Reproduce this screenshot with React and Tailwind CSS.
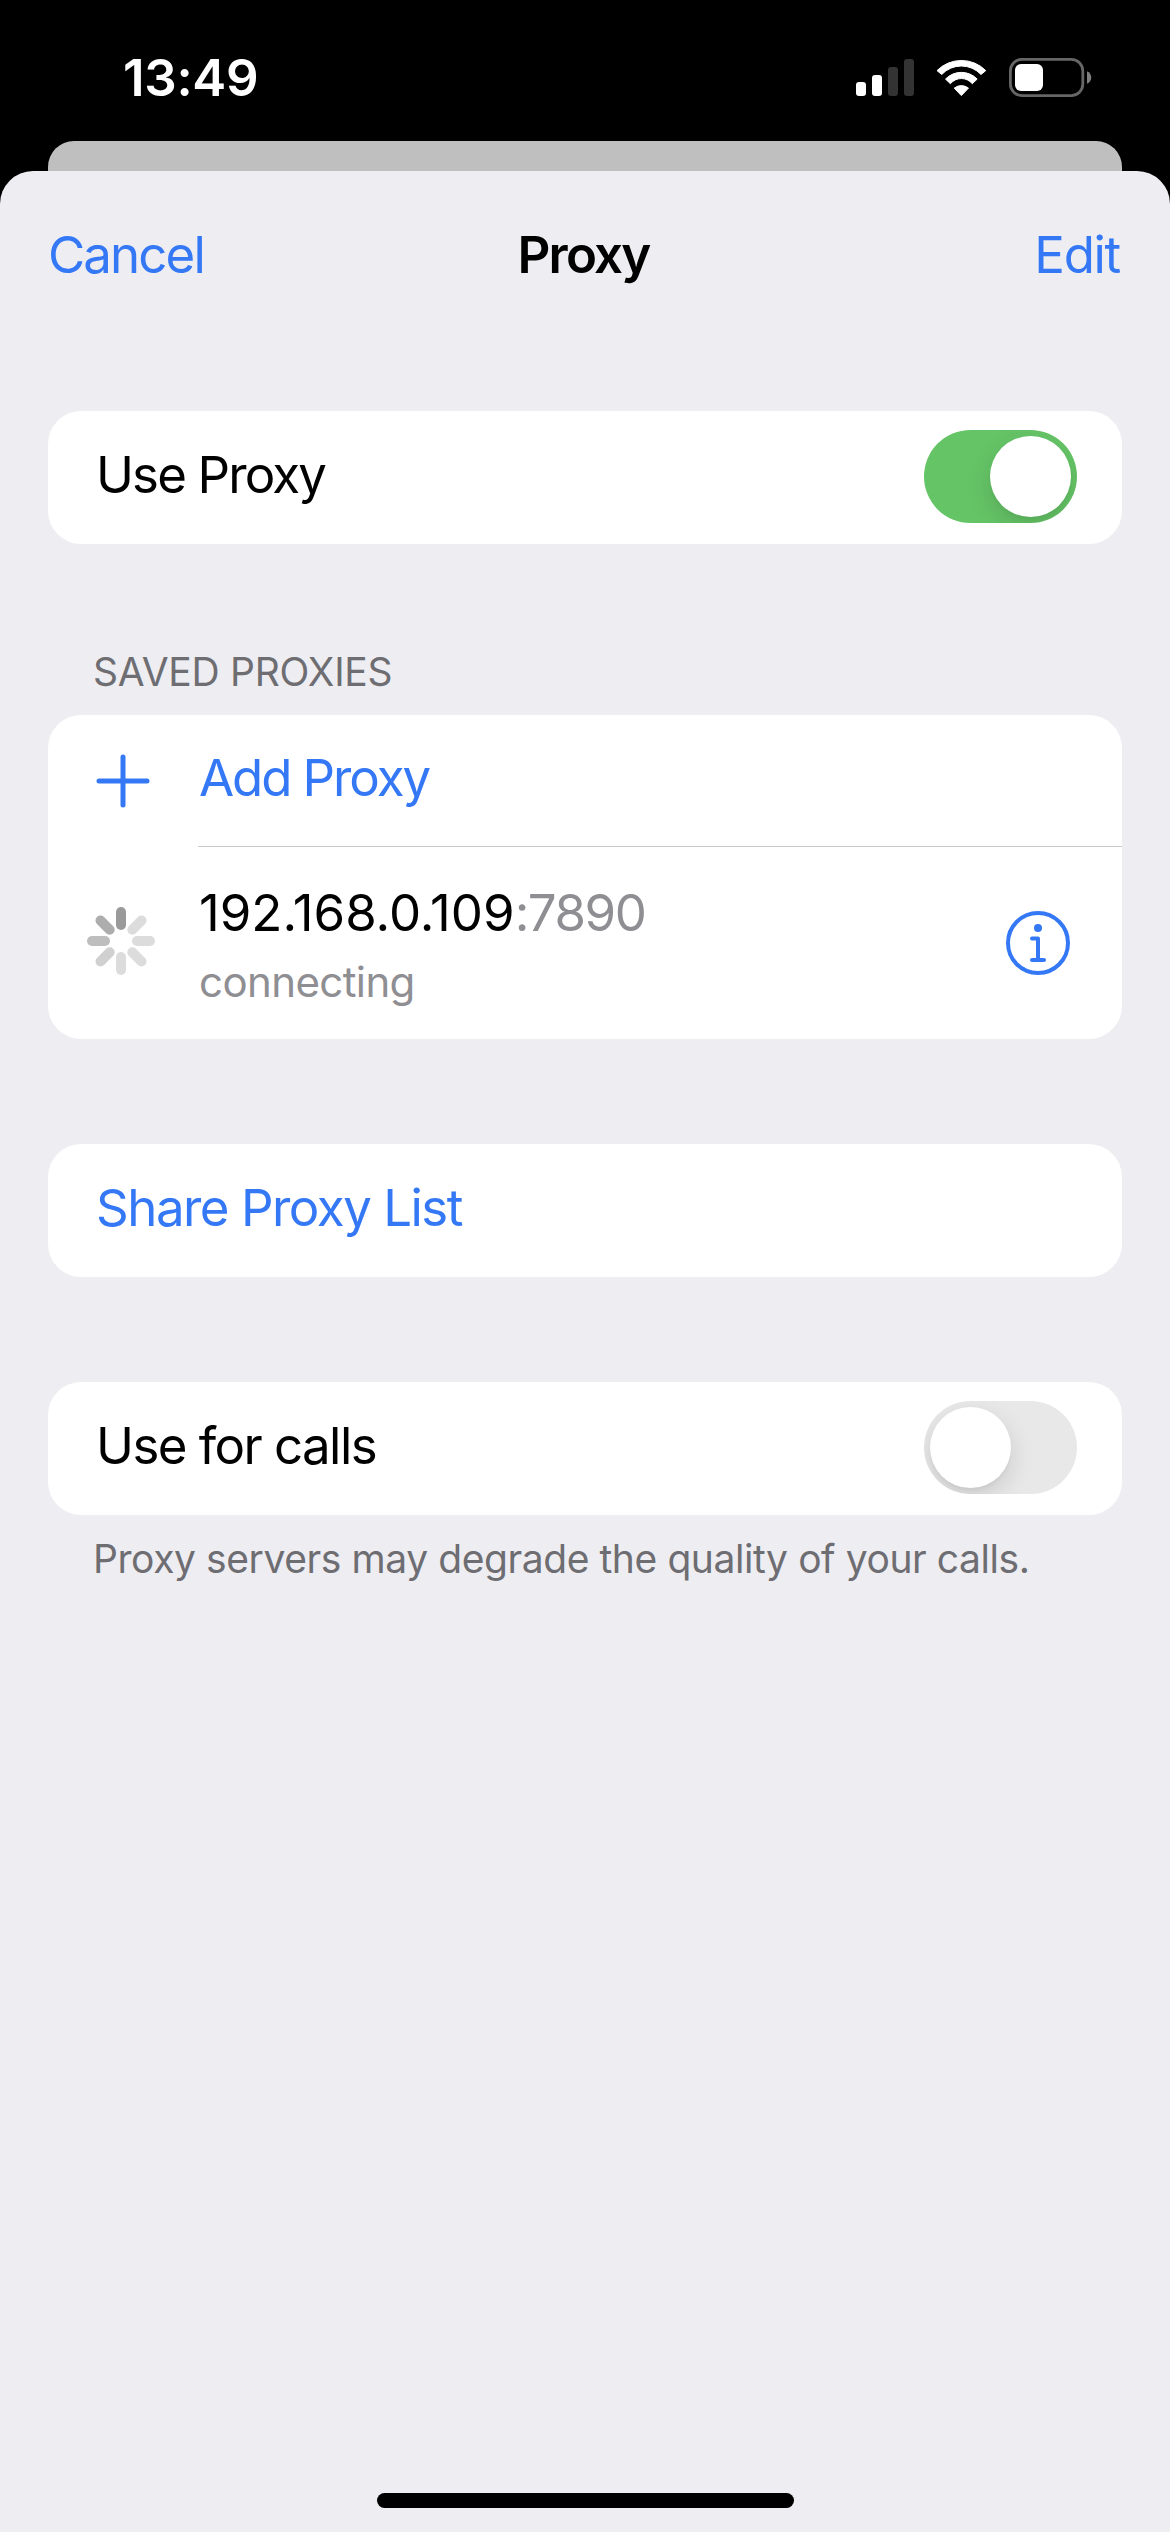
import React from "react";

function StatusBar() {
  return (
    <div className="flex h-[141px] items-start pl-[123px]">
      <span className="mt-[47px] w-[733px] text-[51px] leading-[61px] font-semibold tracking-[-0.3px] text-white">
        13:49
      </span>
      <svg className="mt-[57px] shrink-0" width="236" height="42" viewBox="856 57 236 42" fill="#fff">
        <rect x="856" y="82" width="10" height="14" rx="3" />
        <rect x="872" y="75" width="10" height="21" rx="3" />
        <rect x="888" y="67" width="10" height="29" rx="3" fill="#333" />
        <rect x="904" y="59" width="10" height="37" rx="3" fill="#333" />
        <path
          d="M937 70.6A34.4 34.4 0 0 1 985.8 70.6L981 74.5A27 27 0 0 0 941.7 74.5Z
             M945.5 79.1A22 22 0 0 1 977.2 79.1L972.3 83.7A14.2 14.2 0 0 0 950.4 83.7Z
             M954.2 88.1A12.5 12.5 0 0 1 968.5 88.1L961.35 95.6Z"
          stroke="#fff"
          strokeWidth="1"
          strokeLinejoin="round"
        />
        <rect x="1010.4" y="59.4" width="72.4" height="36.2" rx="11.5" fill="none" stroke="#666" strokeWidth="2.8" />
        <rect x="1015" y="64" width="28" height="27" rx="6" />
        <path d="M1087 71.3C1089.6 72.3 1091.2 74.7 1091.2 77.5S1089.6 82.7 1087 83.7Z" fill="#808080" />
      </svg>
    </div>
  );
}

function Card({ className = "", children }) {
  return <div className={"mx-12 overflow-hidden rounded-[33px] bg-white " + className}>{children}</div>;
}

function Toggle({ on }) {
  return (
    <div
      className={
        "mb-0.5 flex h-[93px] w-[153px] overflow-hidden rounded-full p-1.5 " +
        (on ? "justify-end bg-[#65c466]" : "justify-start bg-[#e8e8e8]")
      }
    >
      <div className="h-[81px] w-[81px] rounded-full bg-white shadow-[0_9px_24px_rgba(0,0,0,0.13),0_3px_3px_rgba(0,0,0,0.03)]" />
    </div>
  );
}

const SPOKES = ["#9a9a9a", "#dcdcdc", "#dcdcdc", "#dcdcdc", "#dcdcdc", "#d0d0d0", "#bebebe", "#adadad"];

function Spinner() {
  return (
    <svg width="68" height="68" viewBox="-34 -34 68 68">
      {SPOKES.map((c, i) => (
        <rect key={i} x="-5" y="-34" width="10" height="23" rx="5" fill={c} transform={`rotate(${i * 45})`} />
      ))}
    </svg>
  );
}

export default function App() {
  return (
    <div className="flex h-[2532px] w-[1170px] flex-col overflow-hidden bg-black font-[Inter,sans-serif] text-[51px] leading-[61px] text-black">
      <StatusBar />
      <div className="mx-12 h-[30px] rounded-t-[26px] bg-[#bfbfbf] shadow-[0_33px_0_#000]" />
      <div className="relative flex flex-1 flex-col rounded-t-[33px] bg-[#eeedf2]">
        <div className="flex justify-between px-12 pt-[53px] text-[#3478f6]">
          <span className="w-[300px] tracking-[-1.9px]">Cancel</span>
          <span className="mr-[3px] font-semibold tracking-[-1.8px] text-black">Proxy</span>
          <span className="w-[300px] pr-[2px] text-right tracking-[-1.3px]">Edit</span>
        </div>

        <Card className="mt-[126px] flex h-[133px] items-center justify-between pr-[45px] pl-12">
          <span className="mb-1.5 tracking-[-1.85px]">Use Proxy</span>
          <Toggle on />
        </Card>

        <div className="mt-[104px] ml-[93px] text-[39px] leading-[47px] tracking-[-0.27px] text-[#6d6d72]">
          SAVED PROXIES
        </div>
        <Card className="mt-5 h-[324px]">
          <div className="flex h-[131px] items-center pl-12 text-[#3478f6]">
            <svg width="54" height="54" viewBox="-27 -27 54 54" stroke="currentColor" strokeWidth="5" strokeLinecap="round">
              <path d="M-24 0H24M0 -24V24" />
            </svg>
            <span className="mb-1.5 ml-[49px] tracking-[-2.1px]">Add Proxy</span>
          </div>
          <div className="ml-[150px] h-px bg-[#c8c7cc]" />
          <div className="flex h-[192px] items-start pr-[52px] pl-[39px]">
            <div className="mt-[60px]">
              <Spinner />
            </div>
            <div className="mt-[35px] ml-[44px] flex-1">
              <div>
                192.168.0.109<span className="tracking-[-1.5px] text-[#8e8e93]">:7890</span>
              </div>
              <div className="mt-[13px] text-[42px] leading-[51px] tracking-[-0.6px] text-[#8e8e93]">connecting</div>
            </div>
            <svg className="mt-16" width="64" height="64" viewBox="1006 911 64 64" fill="none" stroke="#3478f6" strokeWidth="4" strokeLinecap="round" strokeLinejoin="round">
              <circle cx="1038" cy="943" r="30" />
              <circle cx="1038" cy="928" r="4" fill="#3478f6" stroke="none" />
              <path d="M1032 938.5H1038V960M1032 960H1044" />
            </svg>
          </div>
        </Card>

        <Card className="mt-[105px] flex h-[133px] items-center pl-12">
          <span className="mb-1.5 tracking-[-1.5px] text-[#3478f6]">Share Proxy List</span>
        </Card>

        <Card className="mt-[105px] flex h-[133px] items-center justify-between pr-[45px] pl-12">
          <span className="mb-1.5 tracking-[-1.56px]">Use for calls</span>
          <Toggle on={false} />
        </Card>
        <div className="mt-5 ml-[93px] text-[39px] leading-[47px] tracking-[-0.42px] text-[#6d6d72]">
          Proxy servers may degrade the quality of your calls.
        </div>

        <div className="mt-auto mb-6 ml-[377px] h-[15px] w-[417px] rounded-full bg-black" />
      </div>
    </div>
  );
}
